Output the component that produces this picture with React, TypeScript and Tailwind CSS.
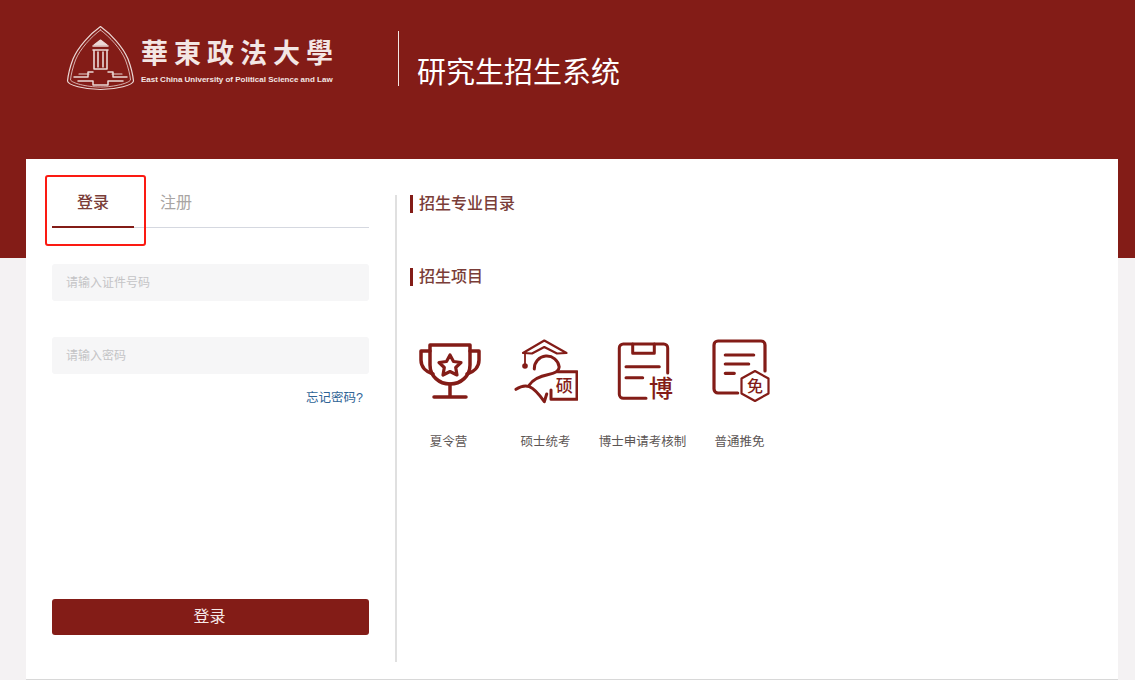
const RED = '#831c17';
const CJK = "'Noto Sans CJK SC', sans-serif";

const Emblem = () => (
  <svg width="70" height="66" viewBox="0 0 70 66" fill="none" stroke="#ecd9d6" strokeLinejoin="round" strokeLinecap="round">
    <path d="M34.500 1.500 C24 9 12 22 7 34 C4 42 2 51 1.500 56 C2 60 18 64.500 34.500 64.500 C51 64.500 67 60 67.500 56 C67 51 65 42 62 34 C57 22 45 9 34.500 1.500 Z" strokeWidth="1.200" />
    <path d="M34.500 5 C25 12 14 24 9.500 35 C6.500 43 5 50 4.500 55 C6 58 20 62 34.500 62 C49 62 63 58 64.500 55 C64 50 62.500 43 59.500 35 C55 24 44 12 34.500 5 Z" strokeWidth="0.800" />
    <path d="M34.500 15 L41 20 L28 20 Z" fill="#ecd9d6" strokeWidth="1.200" />
    <path d="M27 21 H42 M27 25 H42 M28 25 V44 H41 V25 M32 27 V42 M37 27 V42" strokeWidth="1.600" />
    <path d="M8 52 H22 V47 H27 M61 52 H47 V47 H42 M12 56 H27 V60 H42 V56 H57" strokeWidth="1.500" />
    <path d="M13 49 H23 M56 49 H46" strokeWidth="1.200" />
  </svg>
);

const Trophy = () => (
  <svg width="64" height="66" viewBox="0 0 64 66" fill="none" stroke={RED} strokeWidth="3.500" strokeLinecap="round" strokeLinejoin="round">
    <path d="M13 7 H53 V27 C53 38 44 46 33 46 C22 46 13 38 13 27 Z" />
    <path d="M13 13 H4 V22 C4 29 9 34 16 36" />
    <path d="M53 13 H62 V22 C62 29 57 34 50 36" />
    <path d="M33 46 V59 M17 59 H49" />
    <path d="M33 17 L36.500 23.500 L44 24.500 L38.700 29.500 L40 37 L33 33.500 L26 37 L27.300 29.500 L22 24.500 L29.500 23.500 Z" strokeWidth="3.200" />
  </svg>
);

const Master = () => (
  <svg width="64" height="66" viewBox="0 0 64 66" fill="none" stroke={RED} strokeWidth="3" strokeLinecap="round" strokeLinejoin="round">
    <path d="M9 15 L30.300 2.500 L52.500 15 L43 15.500 L30.300 9 L18 15.500 Z" strokeWidth="2.200" />
    <path d="M11 16 V27" strokeWidth="1.800" />
    <circle cx="11" cy="28" r="2.800" fill={RED} stroke="none" />
    <path d="M20.300 31 A12.500 12.500 0 0 1 45.200 29 C45 33 40 35.500 34.500 36.500 C27 38 19.500 40.500 15.300 47" />
    <path d="M2 51.300 C7 48 12 47.500 15.300 48.700 C21 51 27 59 30.300 63.700 L32.700 56" />
    <path d="M43.700 33.700 H63 V61.300 H37 V52" />
    <text x="50.300" y="53.500" textAnchor="middle" fontSize="17" fontWeight="500" fill={RED} stroke="none" fontFamily={CJK}>硕</text>
  </svg>
);

const Doctor = () => (
  <svg width="64" height="66" viewBox="0 0 64 66" fill="none" stroke={RED} strokeWidth="3" strokeLinecap="round" strokeLinejoin="round">
    <path d="M56.700 35 V10 A4 4 0 0 0 52.700 6 H12.300 A4 4 0 0 0 8.300 10 V56.300 A4 4 0 0 0 12.300 60.300 H35" />
    <path d="M21.700 6 V15.300 H43.300 V6" />
    <path d="M15 28.700 H48.300 M15 39.700 H31.700" />
    <text x="50" y="59" textAnchor="middle" fontSize="24" fontWeight="500" fill={RED} stroke="none" fontFamily={CJK}>博</text>
  </svg>
);

const Exempt = () => (
  <svg width="64" height="66" viewBox="0 0 64 66" fill="none" stroke={RED} strokeWidth="3.200" strokeLinecap="round" strokeLinejoin="round">
    <path d="M57 33 V7 A4 4 0 0 0 53 3 H10 A4 4 0 0 0 6 7 V51 A4 4 0 0 0 10 55 H29.700" />
    <path d="M17.300 17 H45.700 M17.300 26 H40.700 M17.300 35.300 H26.300" />
    <path d="M47 33 L60.500 40.500 V55.500 L47 63 L33.500 55.500 V40.500 Z" strokeWidth="2.200" />
    <text x="47" y="54" textAnchor="middle" fontSize="16" fontWeight="500" fill={RED} stroke="none" fontFamily={CJK}>免</text>
  </svg>
);

const programs = [
  { label: '夏令营', icon: Trophy },
  { label: '硕士统考', icon: Master },
  { label: '博士申请考核制', icon: Doctor },
  { label: '普通推免', icon: Exempt },
];

const SectionTitle = ({ text }: { text: string }) => (
  <div className="flex items-center gap-[6px] h-[18px] pl-[13px]">
    <div className="w-[3px] h-[18px] bg-[#831c17]" />
    <span className="text-[16px] leading-[18px] font-medium text-[#7a3d38]">{text}</span>
  </div>
);

const App = () => {
  return (
    <div
      className="relative w-[1135px] h-[680px] overflow-hidden bg-[#f4f2f3]"
      style={{ fontFamily: '"Liberation Sans", "Noto Sans CJK SC", sans-serif' }}
    >
      {/* Header */}
      <div className="h-[258px] bg-[#831c17] pl-[66px] pt-[25px]">
        <div className="flex">
          <Emblem />
          <div className="ml-[5px] w-[192px] pt-[15px] text-[#f3e6e4]">
            <div className="flex justify-between text-[27px] leading-[28px] font-bold">
              <span>華</span><span>東</span><span>政</span><span>法</span><span>大</span><span>學</span>
            </div>
            <div className="mt-[7px] text-[8px] leading-[10px] font-bold whitespace-nowrap">
              East China University of Political Science and Law
            </div>
          </div>
          <div className="ml-[65px] mt-[6px] w-px h-[55px] bg-[#f3e6e4]" />
          <div className="ml-[18px] mt-[28px] text-[29px] leading-[40px] text-white">研究生招生系统</div>
        </div>
      </div>

      {/* Card */}
      <div className="relative ml-[26px] mr-[17px] -mt-[99px] h-[521px] bg-white border-b border-[#d8d8d8] flex">
        {/* Login */}
        <div className="w-[343px] pl-[26px]">
          <div className="relative flex h-[69px] border-b border-[#d5d8e0]">
            <div className="w-[82px] h-[69px] pt-[34px] border-b-2 border-[#831c17] text-center text-[16px] leading-[20px] font-medium text-[#7a3d38]">
              登录
            </div>
            <div className="ml-[26px] pt-[34px] text-[16px] leading-[20px] text-[#a9a5a3]">注册</div>
          </div>
          <div className="mt-[36px] h-[37px] rounded-[3px] bg-[#f6f6f7] pl-[14px] text-[12px] leading-[39px] text-[#c4c4c6]">
            请输入证件号码
          </div>
          <div className="mt-[36px] h-[37px] rounded-[3px] bg-[#f6f6f7] pl-[14px] text-[12px] leading-[39px] text-[#c4c4c6]">
            请输入密码
          </div>
          <div className="mt-[16px] pr-[6px] text-right text-[12.500px] leading-[16px] text-[#2f6496]">忘记密码?</div>
          <div className="mt-[193px] h-[36px] rounded-[3px] bg-[#831c17] pr-[2px] text-center text-[16px] leading-[36px] text-[#f6e9e7]">
            登录
          </div>
        </div>

        {/* Divider */}
        <div className="ml-[26px] mt-[36px] w-[2px] h-[467px] bg-[#e0e0e0]" />

        {/* Projects */}
        <div className="pt-[36px]">
          <SectionTitle text="招生专业目录" />
          <div className="mt-[55px]">
            <SectionTitle text="招生项目" />
          </div>
          <div className="flex mt-[52px] pl-[3px]">
            {programs.map((p) => {
              const Icon = p.icon;
              return (
                <div key={p.label} className="w-[97px] flex flex-col items-center">
                  <div className="h-[66px]">
                    <Icon />
                  </div>
                  <div className="mt-[29px] text-[12.500px] leading-[18px] text-[#5c5554] whitespace-nowrap">{p.label}</div>
                </div>
              );
            })}
          </div>
        </div>
      </div>

      {/* Red annotation box */}
      <div className="absolute left-[45px] top-[175px] w-[101px] h-[71px] rounded-[3px] border-2 border-[#fb1a12]" />
    </div>
  );
};

export default App;
